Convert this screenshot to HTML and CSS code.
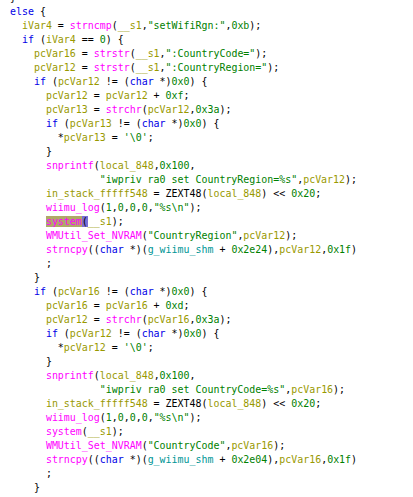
FILE: index.html
```html
<!DOCTYPE html>
<html>
<head>
<meta charset="utf-8">
<link rel="stylesheet" href="styles.css">
</head>
<body>
<pre class="code">}
<span class="k">else</span> {
  <span class="v">iVar4</span> = <span class="f">strncmp</span>(<span class="v">__s1</span>,<span class="s">"setWifiRgn:"</span>,<span class="n">0xb</span>);
  <span class="k">if</span> (<span class="v">iVar4</span> == <span class="n">0</span>) {
    <span class="v">pcVar16</span> = <span class="f">strstr</span>(<span class="v">__s1</span>,<span class="s">":CountryCode="</span>);
    <span class="v">pcVar12</span> = <span class="f">strstr</span>(<span class="v">__s1</span>,<span class="s">":CountryRegion="</span>);
    <span class="k">if</span> (<span class="v">pcVar12</span> != (<span class="k">char</span> *)<span class="n">0x0</span>) {
      <span class="v">pcVar12</span> = <span class="v">pcVar12</span> + <span class="n">0xf</span>;
      <span class="v">pcVar13</span> = <span class="f">strchr</span>(<span class="v">pcVar12</span>,<span class="n">0x3a</span>);
      <span class="k">if</span> (<span class="v">pcVar13</span> != (<span class="k">char</span> *)<span class="n">0x0</span>) {
        *<span class="v">pcVar13</span> = <span class="s">'\0'</span>;
      }
      <span class="f">snprintf</span>(<span class="v">local_848</span>,<span class="n">0x100</span>,
               <span class="s">"iwpriv ra0 set CountryRegion=%s"</span>,<span class="v">pcVar12</span>);
      <span class="v">in_stack_fffff548</span> = ZEXT48(<span class="v">local_848</span>) &lt;&lt; <span class="n">0x20</span>;
      <span class="f">wiimu_log</span>(<span class="n">1</span>,<span class="n">0</span>,<span class="n">0</span>,<span class="n">0</span>,<span class="s">"%s\n"</span>);
      <span class="f hl">system</span><span class="brace">(</span><span class="v">__s1</span>);
      <span class="f">WMUtil_Set_NVRAM</span>(<span class="s">"CountryRegion"</span>,<span class="v">pcVar12</span>);
      <span class="f">strncpy</span>((<span class="k">char</span> *)(<span class="g">g_wiimu_shm</span> + <span class="n">0x2e24</span>),<span class="v">pcVar12</span>,<span class="n">0x1f</span>)
      ;
    }
    <span class="k">if</span> (<span class="v">pcVar16</span> != (<span class="k">char</span> *)<span class="n">0x0</span>) {
      <span class="v">pcVar16</span> = <span class="v">pcVar16</span> + <span class="n">0xd</span>;
      <span class="v">pcVar12</span> = <span class="f">strchr</span>(<span class="v">pcVar16</span>,<span class="n">0x3a</span>);
      <span class="k">if</span> (<span class="v">pcVar12</span> != (<span class="k">char</span> *)<span class="n">0x0</span>) {
        *<span class="v">pcVar12</span> = <span class="s">'\0'</span>;
      }
      <span class="f">snprintf</span>(<span class="v">local_848</span>,<span class="n">0x100</span>,
               <span class="s">"iwpriv ra0 set CountryCode=%s"</span>,<span class="v">pcVar16</span>);
      <span class="v">in_stack_fffff548</span> = ZEXT48(<span class="v">local_848</span>) &lt;&lt; <span class="n">0x20</span>;
      <span class="f">wiimu_log</span>(<span class="n">1</span>,<span class="n">0</span>,<span class="n">0</span>,<span class="n">0</span>,<span class="s">"%s\n"</span>);
      <span class="f">system</span>(<span class="v">__s1</span>);
      <span class="f">WMUtil_Set_NVRAM</span>(<span class="s">"CountryCode"</span>,<span class="v">pcVar16</span>);
      <span class="f">strncpy</span>((<span class="k">char</span> *)(<span class="g">g_wiimu_shm</span> + <span class="n">0x2e04</span>),<span class="v">pcVar16</span>,<span class="n">0x1f</span>)
      ;
    }</pre>
</body>
</html>
```
FILE: styles.css
```css
html, body {
  margin: 0;
  padding: 0;
  background: #ffffff;
  overflow: hidden;
}
.code {
  margin: -9.5px 0 0 0;
  padding: 0 0 0 10px;
  font-family: "DejaVu Sans Mono", monospace;
  font-size: 9.95px;
  line-height: 14px;
  color: #000000;
}
.k { color: #0000e6; }
.f { color: #ff00ff; }
.v { color: #999900; }
.n { color: #008000; }
.s { color: #008000; }
.g { color: #009696; }
.hl { background: #b0a868; }
.brace { background: #7a6fd6; }
```
